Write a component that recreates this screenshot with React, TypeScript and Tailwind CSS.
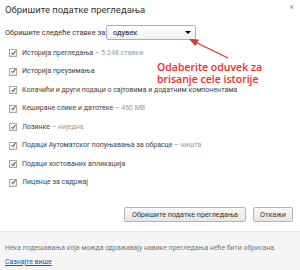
import React from "react";

const items: { label: string; note?: string }[] = [
  { label: "Историја прегледања", note: "5.248 ставки" },
  { label: "Историја преузимања" },
  { label: "Колачићи и други подаци о сајтовима и додатним компонентама" },
  { label: "Кеширане слике и датотеке", note: "460 MB" },
  { label: "Лозинке", note: "ниједна" },
  { label: "Подаци Аутоматског попуњавања за обрасце", note: "ништа" },
  { label: "Подаци хостованих апликација" },
  { label: "Лиценце за садржај" },
];

function Check() {
  return (
    <span className="flex h-[8px] w-[8px] shrink-0 items-center justify-center border border-[#a9a9a9] bg-gradient-to-b from-white to-[#e8e8e8]">
      <svg width="8" height="8" viewBox="0 0 8 8" className="-mt-[1px] ml-[1px]">
        <path d="M1 4.2 L3 6.4 L7.2 0.8" fill="none" stroke="#333" strokeWidth="1.6" />
      </svg>
    </span>
  );
}

export default function App() {
  return (
    <div
      className="relative flex h-[270px] w-[300px] flex-col overflow-hidden bg-white text-[#333]"
      style={{ fontFamily: 'Roboto, "Noto Sans", sans-serif' }}
    >
      <div className="flex items-start justify-between px-[5px] pt-[3px]">
        <h1 className="text-[9.5px] leading-[14px] font-normal text-[#333]">
          Обришите податке прегледања
        </h1>
        <span className="-mt-[1px] mr-[1px] text-[9px] leading-[10px] text-[#999]">×</span>
      </div>

      <div className="mt-[8px] flex items-center px-[5px]">
        <span className="w-[101px] whitespace-nowrap text-[7.4px] leading-[15px]">Обришите следеће ставке за:</span>
        <div className="flex h-[15px] w-[90px] items-center justify-between rounded-[2px] border border-[#8fb3ea] bg-gradient-to-b from-white to-[#efefef] pr-[4px] pl-[6px]">
          <span className="text-[7.5px] leading-[13px] text-[#222]">одувек</span>
          <span className="h-0 w-0 border-x-[3px] border-t-[3px] border-x-transparent border-t-black" />
        </div>
      </div>

      <div className="mt-[3.75px] flex flex-col pl-[9px]">
        {items.map((it) => (
          <div key={it.label} className="flex h-[18.5px] items-center gap-[5px] whitespace-nowrap">
            <Check />
            <span className="text-[7px] leading-[9px] text-[#444]">
              {it.label}
              {it.note && <span className="text-[#999]"> – {it.note}</span>}
            </span>
          </div>
        ))}
      </div>

      <div className="mt-[15px] flex justify-end gap-[7px] pr-[7px]">
        <button className="h-[15px] w-[122px] whitespace-nowrap rounded-[2px] border border-[#b5b5b5] bg-gradient-to-b from-[#f8f8f8] to-[#e6e6e6] text-[7.2px] leading-[13px] text-[#333]">
          Обришите податке прегледања
        </button>
        <button className="h-[15px] w-[40px] rounded-[2px] border border-[#b5b5b5] bg-gradient-to-b from-[#f8f8f8] to-[#e6e6e6] text-[7.2px] leading-[13px] text-[#333]">
          Откажи
        </button>
      </div>

      <div className="mt-[9px] flex flex-1 flex-col border-t border-[#e6e6e6] bg-[#f5f5f5] px-[5px] pt-[10px]">
        <p className="whitespace-nowrap text-[6.9px] leading-[12px] text-[#777]">
          Нека подешавања која можда одражавају навике прегледања неће бити обрисана.
        </p>
        <a className="mt-[2px] self-start text-[6.9px] leading-[12px] text-[#1155cc] underline">Сазнајте више</a>
      </div>

      <div
        className="absolute top-[61px] left-[157px] text-[10.5px] leading-[12px] font-semibold text-[#ee2b2b]"
        style={{ fontFamily: '"Open Sans", sans-serif' }}
      >
        Odaberite oduvek za
        <br />
        brisanje cele istorije
      </div>

      <svg className="absolute top-0 left-0" width="300" height="270">
        <line x1="228" y1="58" x2="195" y2="42" stroke="#ee2b2b" strokeWidth="1.3" />
        <polygon points="189,39 199,39.5 195.5,46" fill="#ee2b2b" />
      </svg>
    </div>
  );
}
